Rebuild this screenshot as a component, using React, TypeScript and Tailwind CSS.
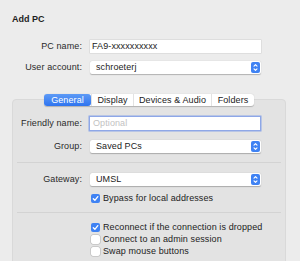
function Stepper() {
  return (
    <div className="absolute right-[1px] top-[1px] bottom-[1px] w-[9px] rounded-[2px] bg-[#3f82f3] flex items-center justify-center">
      <svg width="5" height="9" viewBox="0 0 5 9" fill="none" stroke="white" strokeWidth="1.1" strokeLinecap="round" strokeLinejoin="round">
        <path d="M1 3.2 L2.5 1.6 L4 3.2" />
        <path d="M1 5.8 L2.5 7.4 L4 5.8" />
      </svg>
    </div>
  );
}

function Popup({ value }: { value: string }) {
  return (
    <div className="relative w-[171px] h-[13px] bg-white rounded-[2px] shadow-[0_0.5px_1px_rgba(0,0,0,0.25)] pl-[6px] leading-[13px] text-[#222]">
      {value}
      <Stepper />
    </div>
  );
}

function Label({ text }: { text: string }) {
  return <div className="w-[71px] text-right pr-[1px] text-[#2a2a2a] leading-[13px]">{text}</div>;
}

function Check({ checked, label }: { checked: boolean; label: string }) {
  return (
    <div className="flex items-center h-[9px] pl-[79px]">
      {checked ? (
        <div className="w-[9px] h-[9px] rounded-[2px] bg-[#3f82f3] flex items-center justify-center">
          <svg width="7" height="7" viewBox="0 0 7 7" fill="none" stroke="white" strokeWidth="1.3" strokeLinecap="round" strokeLinejoin="round">
            <path d="M1.3 3.7 L2.9 5.3 L5.8 1.6" />
          </svg>
        </div>
      ) : (
        <div className="w-[9px] h-[9px] rounded-[2px] bg-white shadow-[0_0_0_0.5px_rgba(0,0,0,0.22)]" />
      )}
      <span className="ml-[3px] text-[#222] leading-[9px]">{label}</span>
    </div>
  );
}

export default function App() {
  const tabs = [
    { name: "General", w: "w-[47px]" },
    { name: "Display", w: "w-[42px]" },
    { name: "Devices & Audio", w: "w-[78px]" },
    { name: "Folders", w: "w-[43px]" },
  ];

  return (
    <div className="w-[300px] h-[261px] overflow-hidden bg-[#ececec] pl-[12px] pt-[14px] text-[9px] tracking-[0.1px] font-['Liberation_Sans',Arial,sans-serif]">
      <div className="h-[11px] leading-[11px] font-bold tracking-normal text-[#1e1e1e]">Add PC</div>

      <div className="flex mt-[15px]">
        <Label text="PC name:" />
        <div className="ml-[7px] w-[171px] h-[13px] bg-white shadow-[0_0_0_0.5px_rgba(0,0,0,0.12)] pl-[2px] leading-[13px] text-[#222]">
          FA9-xxxxxxxxxx
        </div>
      </div>

      <div className="flex mt-[8px]">
        <Label text="User account:" />
        <div className="ml-[7px]">
          <Popup value="schroeterj" />
        </div>
      </div>

      <div className="w-[274px] mt-[20px] flex flex-col">
        <div className="relative z-10 flex justify-center">
          <div className="flex h-[12px] rounded-[3px] bg-white shadow-[0_0.5px_1px_rgba(0,0,0,0.22)]">
            {tabs.map((t, i) => (
              <div
                key={t.name}
                className={
                  i === 0
                    ? `${t.w} rounded-[3px] bg-gradient-to-b from-[#5d9af6] to-[#2f74ef] text-white text-center leading-[12px]`
                    : `${t.w} border-l border-[#e2e2e2] text-[#222] text-center leading-[12px]`
                }
              >
                {t.name}
              </div>
            ))}
          </div>
        </div>

        <div className="-mt-[7px] h-[180px] bg-[#e3e3e3] rounded-[4px] border border-[#d9d9d9] pt-[17px]">
          <div className="flex -ml-[1px]">
            <Label text="Friendly name:" />
            <div className="ml-[7px] w-[170px] h-[13px] bg-white shadow-[0_0_0_1.5px_#8ea7e7] pl-[3px] leading-[13px] text-[#c2c2c2]">
              Optional
            </div>
          </div>

          <div className="flex mt-[10px] -ml-[1px]">
            <Label text="Group:" />
            <div className="ml-[7px]">
              <Popup value="Saved PCs" />
            </div>
          </div>

          <div className="mx-[4px] mt-[9px] h-px bg-[#d3d3d3]" />

          <div className="flex mt-[10px] -ml-[1px]">
            <Label text="Gateway:" />
            <div className="ml-[7px]">
              <Popup value="UMSL" />
            </div>
          </div>

          <div className="mt-[8px] -ml-[1px]">
            <Check checked label="Bypass for local addresses" />
          </div>

          <div className="mx-[4px] mt-[9px] h-px bg-[#d3d3d3]" />

          <div className="mt-[10px] -ml-[1px] flex flex-col gap-[3px]">
            <Check checked label="Reconnect if the connection is dropped" />
            <Check checked={false} label="Connect to an admin session" />
            <Check checked={false} label="Swap mouse buttons" />
          </div>
        </div>
      </div>
    </div>
  );
}
